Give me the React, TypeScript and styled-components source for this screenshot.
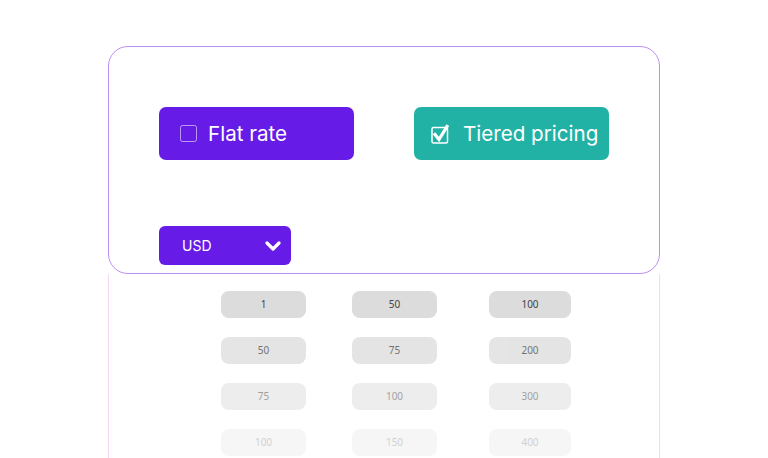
import React from 'react';
import styled, { createGlobalStyle } from 'styled-components';

const GlobalStyle = createGlobalStyle`
  html, body {
    margin: 0;
    padding: 0;
    background: #fff;
    overflow: hidden;
  }
  body {
    font-family: Inter, 'Noto Sans', sans-serif;
  }
`;

const Page = styled.div`
  width: 768px;
  height: 458px;
  display: flex;
  justify-content: center;
  padding-top: 46px;
  box-sizing: border-box;
`;

const Frame = styled.div`
  width: 552px;
  display: flex;
  flex-direction: column;
`;

const Card = styled.div`
  height: 228px;
  box-sizing: border-box;
  border: 1px solid #bd8ef2;
  border-radius: 20px;
  padding: 60px 50px 8px;
  display: flex;
  flex-direction: column;
  justify-content: space-between;
  background: #fff;
`;

const ToggleRow = styled.div`
  display: flex;
  justify-content: space-between;
`;

const Toggle = styled.button<{ active?: boolean }>`
  width: 195px;
  height: 53px;
  border: none;
  border-radius: 7px;
  background: ${({ active }) => (active ? '#21b2a5' : '#661ce6')};
  color: #fff;
  display: flex;
  align-items: center;
  gap: ${({ active }) => (active ? '10px' : '11px')};
  padding: 0 0 0 ${({ active }) => (active ? '17px' : '21px')};
  font-family: Inter, 'Noto Sans', sans-serif;
  font-size: 20.6px;
  font-weight: 400;
  cursor: pointer;
`;

const Select = styled.button`
  width: 132px;
  height: 39px;
  border: none;
  border-radius: 6px;
  background: #661ce6;
  color: #fff;
  display: flex;
  align-items: center;
  justify-content: space-between;
  padding: 0 10px 0 23px;
  box-sizing: border-box;
  font-family: Inter, 'Noto Sans', sans-serif;
  font-size: 14px;
  cursor: pointer;
`;

const Tiers = styled.div`
  flex: 1;
  border-left: 1px solid #f5d6f5;
  border-right: 1px solid #f5d6f5;
  padding: 17px 0 0 112px;
`;

const Grid = styled.div`
  display: grid;
  grid-template-columns: 85px 85px 88px;
  column-gap: 46px;
  row-gap: 19px;
  & > :nth-child(3n) {
    margin-left: 6px;
  }
`;

const Pill = styled.div<{ fade: number }>`
  height: 27px;
  border-radius: 8px;
  background: #dcdcdc;
  color: #444;
  opacity: ${({ fade }) => fade};
  display: flex;
  align-items: center;
  justify-content: center;
  font-family: 'Noto Sans', Inter, sans-serif;
  font-size: 10px;
  padding-bottom: 2px;
  box-sizing: border-box;
`;

const EmptyBox = () => (
  <svg width="17" height="17" viewBox="0 0 17 17">
    <rect x="0.5" y="0.5" width="16" height="16" rx="2" fill="none" stroke="rgba(255,255,255,0.55)" strokeWidth="1" />
  </svg>
);

const CheckedBox = () => (
  <svg width="22" height="20" viewBox="0 0 22 20">
    <rect x="1" y="3.5" width="15.5" height="15.5" rx="1.5" fill="none" stroke="#fff" strokeWidth="1.5" />
    <path d="M4 10.5 L8 15.5 L16 2.5" fill="none" stroke="#fff" strokeWidth="3.2" strokeLinecap="square" strokeLinejoin="miter" />
  </svg>
);

const Chevron = () => (
  <svg width="16" height="10" viewBox="0 0 16 10">
    <polyline points="2,2 8,8 14,2" fill="none" stroke="#fff" strokeWidth="3.2" strokeLinecap="round" strokeLinejoin="round" />
  </svg>
);

const rows = [
  ['1', '50', '100'],
  ['50', '75', '200'],
  ['75', '100', '300'],
  ['100', '150', '400'],
];
const fades = [1, 0.75, 0.5, 0.25];

export default function App() {
  return (
    <>
      <GlobalStyle />
      <Page>
        <Frame>
          <Card>
            <ToggleRow>
              <Toggle>
                <EmptyBox />
                Flat rate
              </Toggle>
              <Toggle active>
                <CheckedBox />
                Tiered pricing
              </Toggle>
            </ToggleRow>
            <Select>
              USD
              <Chevron />
            </Select>
          </Card>
          <Tiers>
            <Grid>
              {rows.map((row, r) =>
                row.map((v, c) => (
                  <Pill key={`${r}-${c}`} fade={fades[r]}>
                    {v}
                  </Pill>
                ))
              )}
            </Grid>
          </Tiers>
        </Frame>
      </Page>
    </>
  );
}
